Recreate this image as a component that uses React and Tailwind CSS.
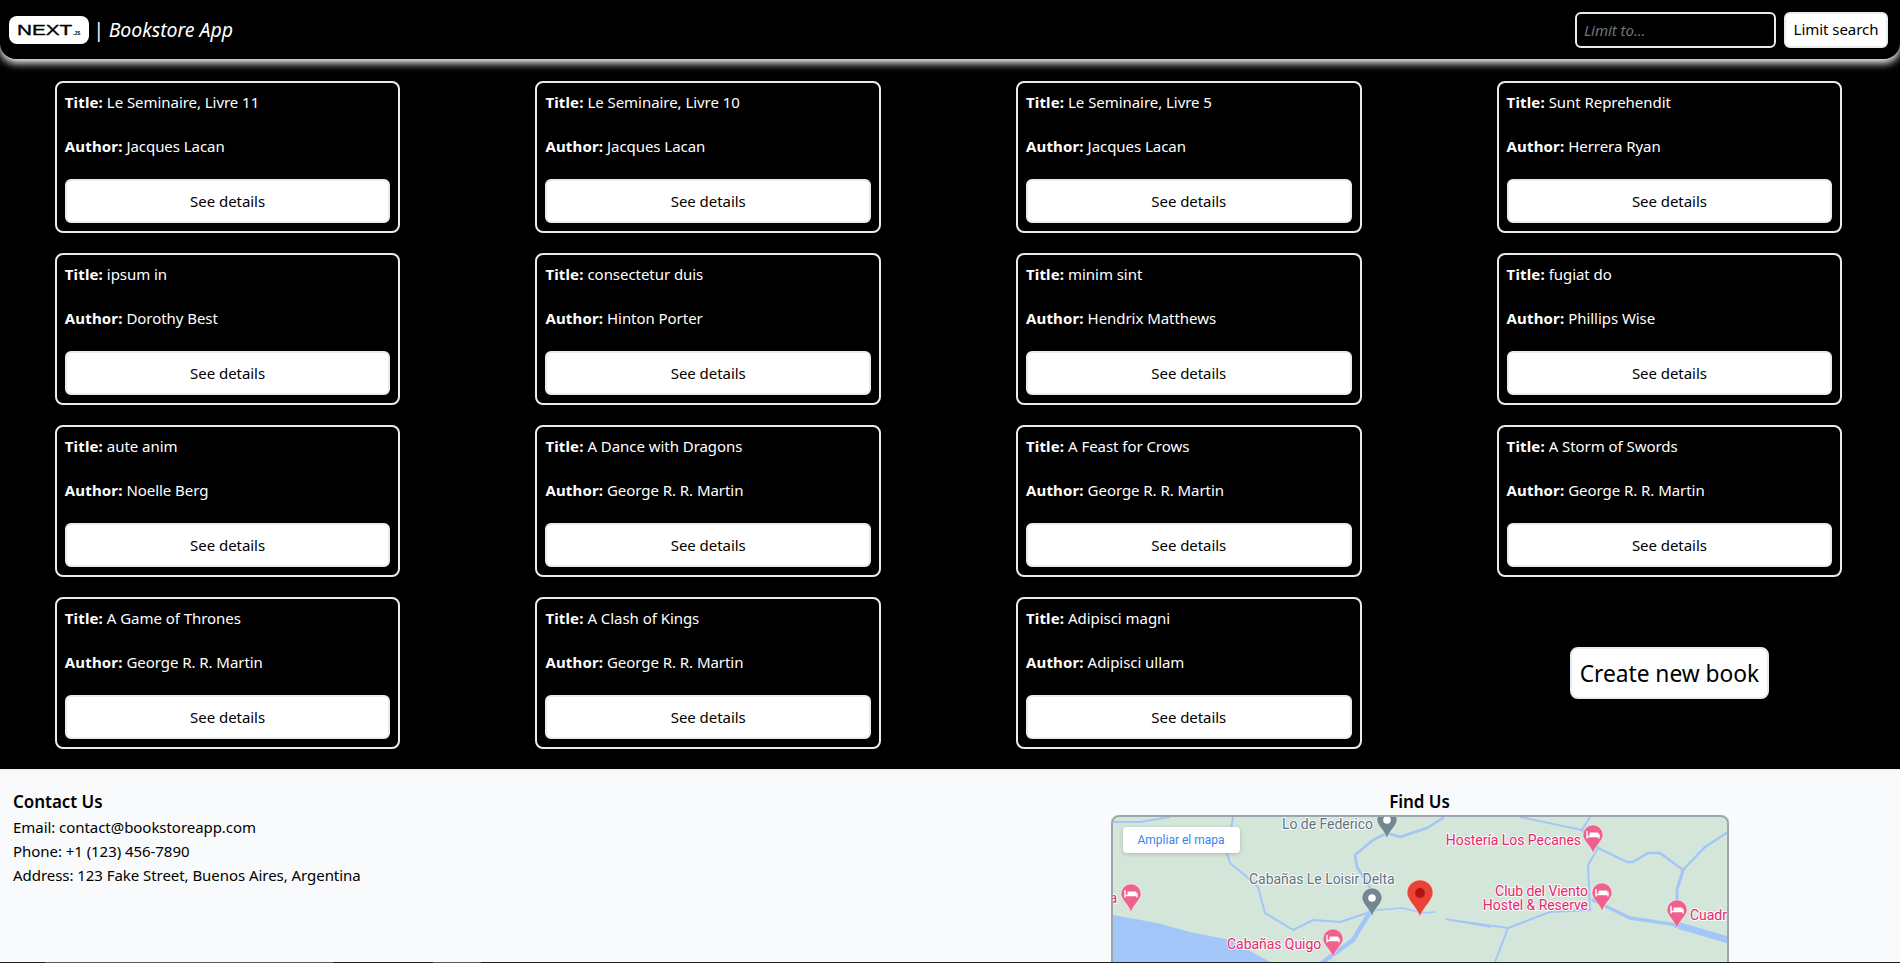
const books = [
  ["Le Seminaire, Livre 11", "Jacques Lacan"],
  ["Le Seminaire, Livre 10", "Jacques Lacan"],
  ["Le Seminaire, Livre 5", "Jacques Lacan"],
  ["Sunt Reprehendit", "Herrera Ryan"],
  ["ipsum in", "Dorothy Best"],
  ["consectetur duis", "Hinton Porter"],
  ["minim sint", "Hendrix Matthews"],
  ["fugiat do", "Phillips Wise"],
  ["aute anim", "Noelle Berg"],
  ["A Dance with Dragons", "George R. R. Martin"],
  ["A Feast for Crows", "George R. R. Martin"],
  ["A Storm of Swords", "George R. R. Martin"],
  ["A Game of Thrones", "George R. R. Martin"],
  ["A Clash of Kings", "George R. R. Martin"],
  ["Adipisci magni", "Adipisci ullam"],
];

const BookCard = ({ title, author }) => (
  <div className="flex h-[152px] flex-col rounded-lg border-2 border-[#e9ecef] bg-black p-2 text-white">
    <p className="mb-[21px] leading-[23px]">
      <b className="tracking-[0.15px]">Title:</b> {title}
    </p>
    <p className="mb-[21px] leading-[23px]">
      <b className="tracking-[0.15px]">Author:</b> {author}
    </p>
    <button className="h-11 rounded-md border-2 border-[#e9ecef] bg-white text-black">
      See details
    </button>
  </div>
);

const NextLogo = () => (
  <div className="flex h-7 w-20 items-center justify-center rounded-lg bg-white">
    <svg width="80" height="28" viewBox="0 0 80 28" fill="#000">
      <text
        x="8"
        y="19"
        fontSize="15"
        stroke="#000"
        strokeWidth="0.35"
        textLength="55"
        lengthAdjust="spacingAndGlyphs"
        className="font-['Liberation_Sans',sans-serif]"
      >
        NEXT
      </text>
      <text x="64" y="19" fontSize="5" fontWeight="700" className="font-['Liberation_Sans',sans-serif]">
        .JS
      </text>
    </svg>
  </div>
);

const Pin = ({ x, y, r = 10, tip = 19, fill = "#f0608f", dot, bed }) => (
  <g>
    <path
      d={`M${x} ${y + tip}C${x - 1} ${y + tip - 7} ${x - r} ${y + r * 0.55} ${x - r} ${y}A${r} ${r} 0 1 1 ${x + r} ${y}C${x + r} ${y + r * 0.55} ${x + 1} ${y + tip - 7} ${x} ${y + tip}Z`}
      fill={fill}
      stroke="#fff"
      strokeWidth="0.4"
    />
    {dot && <circle cx={x} cy={y} r={r * 0.38} fill={dot} />}
    {bed && (
      <path
        d={`M${x - 6} ${y - 4}v7.5M${x - 6} ${y + 1.5}h12M${x + 6} ${y - 1}v4.5`}
        stroke="#fff"
        strokeWidth="1.4"
        fill="none"
      />
    )}
    {bed && <rect x={x - 3.5} y={y - 2.5} width="9" height="3.5" rx="1" fill="#fff" />}
  </g>
);

const Label = ({ x, y, anchor = "start", gray, children }) => (
  <text
    x={x}
    y={y}
    textAnchor={anchor}
    fontSize="14"
    fill={gray ? "#5f7382" : "#e8286f"}
    stroke="#fff"
    strokeWidth="2"
    strokeOpacity="0.85"
    className="font-['Roboto',sans-serif] [paint-order:stroke]"
  >
    {children}
  </text>
);

const River = ({ d, w = 2 }) => (
  <path d={d} fill="none" stroke="#a3c6f8" strokeWidth={w} strokeLinejoin="round" strokeLinecap="round" />
);

const MapEmbed = () => (
  <div className="relative mx-auto h-[160px] w-[618px] overflow-hidden rounded-t-lg border-2 border-[#a0a6b0] bg-[#d4e6d9]">
    <svg className="block" width="614" height="158" viewBox="1113 817 614 158">
      <path d="M1113 915L1157 923L1190 932L1230 940L1270 962L1275 975L1113 975Z" fill="#a3c6f8" />
      <River d="M1113 822L1140 822L1170 817" />
      <River d="M1233 817L1227 853L1230 863L1247 877L1258 887L1265 913L1293 930L1313 920L1340 922L1370 912" />
      <River d="M1323 962L1353 940L1370 912" w={4.5} />
      <River d="M1370 912L1377 910L1403 908L1423 913L1435 912" w={1.4} />
      <River d="M1370 887L1357 867L1355 855L1373 840L1387 833L1400 837L1427 828L1443 818" w={2.6} />
      <River d="M1446 919L1490 927" w={1.4} />
      <River d="M1520 817L1582 830L1590 817" />
      <River d="M1582 830L1598 848L1588 865L1590 910L1550 912L1508 928L1450 920" />
      <River d="M1508 928L1495 962" />
      <River d="M1598 848L1627 862L1633 862L1648 853L1660 853L1683 870L1705 847L1728 832" w={2.4} />
      <River d="M1683 870L1677 890L1677 907" w={3} />
      <River d="M1593 900L1630 918L1677 925" w={3.4} />
      <River d="M1677 925L1728 940" w={7} />

      <Label x={1282} y={829} gray>Lo de Federico</Label>
      <Label x={1249} y={884} gray>Cabañas Le Loisir Delta</Label>
      <Label x={1581} y={845} anchor="end">Hostería Los Pecanes</Label>
      <Label x={1588} y={896} anchor="end">Club del Viento</Label>
      <Label x={1588} y={910} anchor="end">Hostel &amp; Reserve</Label>
      <Label x={1690} y={920}>Cuadr</Label>
      <Label x={1227} y={949}>Cabañas Quigo</Label>
      <Label x={1117} y={903} anchor="end">a</Label>

      <Pin x={1387} y={820} fill="#74868f" dot="#fff" />
      <Pin x={1372} y={898} fill="#74868f" dot="#fff" />
      <Pin x={1420} y={893} r={13} tip={24} fill="#ea4335" dot="#b31412" />
      <Pin x={1593} y={835} bed />
      <Pin x={1602} y={893} bed />
      <Pin x={1677} y={910} bed />
      <Pin x={1131} y={894} bed />
      <Pin x={1333} y={939} bed />
    </svg>
    <a className="absolute left-[10px] top-[10px] flex h-[26px] w-[117px] items-center justify-center rounded-sm bg-white font-['Roboto',sans-serif] text-xs tracking-normal text-[#3b82f0] shadow-[0_1px_4px_rgba(0,0,0,0.2)]">
      Ampliar el mapa
    </a>
  </div>
);

export default function App() {
  return (
    <div className="flex h-screen flex-col overflow-hidden bg-black font-['Noto_Sans',sans-serif] text-[15px] tracking-[-0.05px]">
      <header className="flex h-[59px] shrink-0 items-center justify-between rounded-b-2xl bg-black pl-[9px] pr-3 text-white shadow-[0_4px_8px_#fff]">
        <div className="flex items-center gap-[4px]">
          <NextLogo />
          <span className="text-[19.5px] italic">| Bookstore App</span>
        </div>
        <div className="flex items-center gap-2">
          <input
            placeholder="Limit to..."
            className="h-9 w-[201px] rounded-md border-2 border-[#e9ecef] bg-black px-[7px] text-white outline-none placeholder:italic placeholder:text-[#6c757d]"
          />
          <button className="h-9 w-[104px] rounded-md border-2 border-[#e9ecef] bg-white text-black">
            Limit search
          </button>
        </div>
      </header>

      <main className="mt-[22px] grid shrink-0 grid-cols-4 gap-x-[135px] gap-y-5 pb-5 pl-[54.8px] pr-[57.8px]">
        {books.map(([title, author]) => (
          <BookCard key={title} title={title} author={author} />
        ))}
        <div className="flex items-center justify-center">
          <button className="h-[52px] w-[199px] rounded-lg border-2 border-[#e9ecef] bg-white pt-[3px] text-[22.8px] text-black">
            Create new book
          </button>
        </div>
      </main>

      <footer className="flex min-h-0 flex-1 justify-between overflow-hidden border-t-2 border-[#f1f2f4] bg-[#f9fafc] pl-[13px] pt-[19px] text-black">
        <div>
          <h3 className="mb-[1px] text-[17px] font-semibold leading-6">Contact Us</h3>
          <p className="leading-6">Email: contact@bookstoreapp.com</p>
          <p className="leading-6">Phone: +1 (123) 456-7890</p>
          <p className="leading-6">Address: 123 Fake Street, Buenos Aires, Argentina</p>
        </div>
        <div className="w-[961px]">
          <h3 className="mb-[1px] text-center text-[17px] font-semibold leading-6">Find Us</h3>
          <MapEmbed />
        </div>
      </footer>

      <div className="flex h-px shrink-0 bg-[#1f1f1f]">
        <div className="w-[45px]" />
        <div className="w-[288px] bg-[#5a5a5a]" />
        <div className="w-[100px]" />
        <div className="w-[48px] bg-[#5a5a5a]" />
      </div>
    </div>
  );
}
